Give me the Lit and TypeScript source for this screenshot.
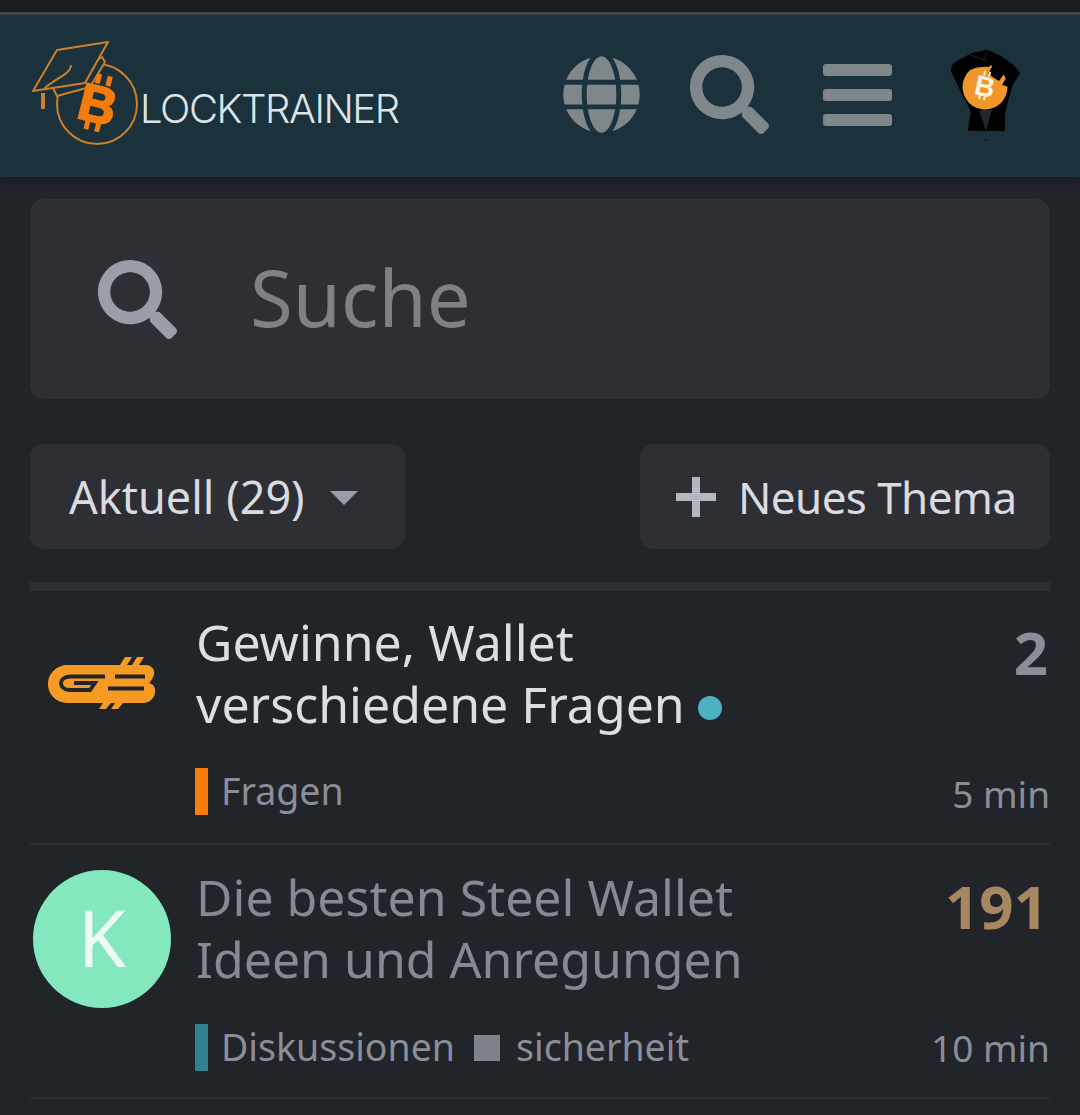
import { LitElement, html, css, svg } from 'lit';
import { customElement } from 'lit/decorators.js';

const searchPath = 'M505 442.7L405.3 343c-4.5-4.5-10.6-7-17-7H372c27.6-35.3 44-79.7 44-128C416 93.1 322.9 0 208 0S0 93.1 0 208s93.1 208 208 208c48.3 0 92.7-16.4 128-44v16.3c0 6.4 2.5 12.5 7 17l99.7 99.7c9.4 9.4 24.6 9.4 33.9 0l28.3-28.3c9.4-9.4 9.4-24.6.1-34zM208 336c-70.7 0-128-57.2-128-128 0-70.7 57.2-128 128-128 70.7 0 128 57.2 128 128 0 70.7-57.2 128-128 128z';
const globePath = 'M336.5 160C322 70.7 287.8 8 248 8s-74 62.7-88.5 152h177zM152 256c0 22.2 1.2 43.5 3.3 64h185.3c2.1-20.5 3.3-41.8 3.3-64s-1.2-43.5-3.3-64H155.3c-2.1 20.5-3.3 41.8-3.3 64zm324.7-96c-28.6-67.9-86.5-120.4-158-141.6 24.4 33.8 41.2 84.7 50 141.6h108zM177.2 18.4C105.8 39.6 47.8 92.1 19.3 160h108c8.7-56.9 25.5-107.8 49.9-141.6zM487.4 192H372.7c2.1 21 3.3 42.5 3.3 64s-1.2 43-3.3 64h114.6c5.5-20.5 8.6-41.8 8.6-64s-3.1-43.5-8.5-64zM120 256c0-21.5 1.2-43 3.3-64H8.6C3.2 212.5 0 233.8 0 256s3.2 43.5 8.6 64h114.6c-2-21-3.2-42.5-3.2-64zm39.5 96c14.5 89.3 48.7 152 88.5 152s74-62.7 88.5-152h-177zm159.3 141.6c71.4-21.2 129.4-73.7 158-141.6h-108c-8.8 56.9-25.6 107.8-50 141.6zM19.3 352c28.6 67.9 86.5 120.4 158 141.6-24.4-33.8-41.2-84.7-50-141.6h-108z';

const searchIcon = (cls: string) => html`<svg class=${cls} viewBox="0 0 512 512"><path fill="currentColor" d=${searchPath}></path></svg>`;

const logoMark = svg`
  <circle cx="97" cy="104" r="40" fill="none" stroke="#c9812d" stroke-width="2"></circle>
  <path d="M102 57 L105 62 L90 87 L57 96 L53 88 Z" fill="#1b313c" stroke="#c9812d" stroke-width="2" stroke-linejoin="round"></path>
  <path d="M57 50 L108 42 L85 83 L33 91 Z" fill="#1b313c" stroke="#c9812d" stroke-width="2" stroke-linejoin="round"></path>
  <path d="M71 66 C70 74 56 78 45 88" fill="none" stroke="#c9812d" stroke-width="2" stroke-linecap="round"></path>
  <rect x="41" y="93" width="4" height="16" fill="#c9812d"></rect>
  <g fill="#f57c0a" transform="rotate(14 97 103)">
    <text x="98" y="122" font-family="Liberation Sans" font-weight="700" font-size="52" stroke="#f57c0a" stroke-width="2" text-anchor="middle">B</text>
    <rect x="90" y="74" width="5" height="10"></rect><rect x="101" y="74" width="5" height="10"></rect>
    <rect x="90" y="121" width="5" height="10"></rect><rect x="101" y="121" width="5" height="10"></rect>
  </g>
`;

const fist = html`<svg class="fist" viewBox="0 0 74 94">
  <path d="M20 81 L23 62 L14 45 L3 22 C3 16 6 14 10 12 L24 5 L38 2 L52 8 L63 16 L70 24 L63 35 L58 52 L55 65 L55 81 Z" fill="#000" stroke="#000" stroke-width="2" stroke-linejoin="round"></path>
  <circle cx="36" cy="38" r="22.5" fill="#f0962a"></circle>
  <path d="M2 22 L13 26 C20 20 30 17 40 18 L48 8 L38 1 L23 4 L5 14 Z" fill="#000"></path>
  <path d="M39 25 L48 8 L62 15 L50 32 Z M53 36 L63 19 L71 24 L60 38 Z" fill="#000"></path>
  <path d="M22 6 L38 12 M38 3 L34 12" stroke="#1b313c" stroke-width="0.8" fill="none"></path>
  <path d="M30 61 L43 61 L37 82 Z" fill="#20282c"></path>
  <circle cx="37" cy="91" r="0.8" fill="#000"></circle>
  <g fill="#fff3dd" transform="rotate(12 36 37)">
    <text x="36" y="47" font-family="Liberation Sans" font-weight="700" font-size="28" text-anchor="middle">B</text>
    <rect x="32" y="22" width="2" height="5"></rect><rect x="37" y="22" width="2" height="5"></rect>
    <rect x="32" y="46" width="2" height="5"></rect><rect x="37" y="46" width="2" height="5"></rect>
  </g>
</svg>`;

const gbLogo = html`<svg class="gb" viewBox="0 0 110 52">
  <path fill="#f59a23" d="M20 8 H72 L77 0 H84 L79 8 H84 L89 0 H96 L91 8 H97 C106 8 108 16 105 20 C104 23 102 25 101 26 C105 27 108 30 107 36 C106 42 101 46 95 46 H75 L70 52 H63 L67 46 H63 L58 52 H51 L55 46 H20 C8 46 0 37 0 27 C0 16 9 8 20 8 Z"></path>
  <path fill="none" stroke="#212429" stroke-width="3.8" d="M57 19.5 H22 C10 19.5 10 33 22 33 H42 L47 26 H26"></path>
  <path fill="none" stroke="#212429" stroke-width="3.8" d="M67 19.5 H97 M60 31.5 H96"></path>
</svg>`;

@customElement('app-root')
export class AppRoot extends LitElement {
  static styles = css`
    :host {
      display: block;
      height: 1115px;
      overflow: hidden;
      background: #212429;
      font-family: 'Noto Sans', sans-serif;
    }
    .status {
      height: 12px;
      background: #1d1e20;
    }
    header {
      height: 162px;
      border-top: 3px solid #40484b;
      background: #1b313c;
      display: flex;
      align-items: center;
      box-shadow: 0 3px 10px rgba(0, 0, 0, 0.35);
      position: relative;
    }
    .logo {
      display: flex;
      align-items: center;
      width: 563px;
      flex: none;
    }
    .logo svg {
      width: 140px;
      height: 162px;
      flex: none;
    }
    .logo span {
      font-family: 'Inter', sans-serif;
      font-weight: 300;
      font-size: 40px;
      letter-spacing: -1.45px;
      color: #dde4e8;
      margin-top: 24px;
    }
    nav {
      display: flex;
      align-items: center;
      color: #7f878b;
    }
    nav svg {
      display: block;
      flex: none;
    }
    .globe { width: 77px; height: 79px; margin-top: -3px; }
    .nav-search { width: 79px; height: 79px; margin: -3px 0 0 50px; }
    .bars {
      width: 69px;
      margin: -3px 0 0 54px;
      display: grid;
      gap: 13px;
    }
    .bars i {
      display: block;
      height: 12px;
      border-radius: 3px;
      background: #7f878b;
    }
    .fist { width: 74px; height: 94px; margin-left: 57px; }
    main {
      padding: 22px 30px 0;
    }
    .search {
      height: 200px;
      border-radius: 14px;
      background: #2e2f35;
      display: flex;
      align-items: center;
      padding-left: 68px;
      color: #9b9ea9;
    }
    .search svg {
      width: 79px;
      height: 79px;
      flex: none;
    }
    .search span {
      margin: 0 0 4px 73px;
      font-size: 78px;
      color: #7e8084;
    }
    .controls {
      display: flex;
      justify-content: space-between;
      margin-top: 45px;
      padding-bottom: 33px;
      border-bottom: 9px solid #2e2f35;
    }
    .btn {
      height: 105px;
      border-radius: 14px;
      background: #2e2f35;
      display: flex;
      align-items: center;
      color: #d9dbe0;
      font-size: 45px;
      box-sizing: border-box;
    }
    .filter { width: 375px; padding-left: 39px; }
    .caret {
      margin-left: 25px;
      width: 0;
      height: 0;
      border-left: 14px solid transparent;
      border-right: 14px solid transparent;
      border-top: 14px solid #9b9ea9;
      margin-top: 2px;
    }
    .new {
      width: 410px;
      padding-left: 36px;
      font-size: 44px;
      letter-spacing: -0.6px;
    }
    .plus { width: 40px; height: 40px; margin-right: 22px; flex: none; color: #b5b7be; }
    .topic {
      display: grid;
      grid-template-columns: 165px 1fr auto;
      height: 252px;
      border-bottom: 2px solid #2e2f35;
    }
    .avatar-cell {
      padding-top: 25px;
      display: flex;
      justify-content: flex-start;
    }
    .gb {
      width: 110px;
      height: 52px;
      margin: 41px 0 0 18px;
    }
    .avatar {
      width: 138px;
      height: 138px;
      margin-left: 3px;
      padding-bottom: 4px;
      box-sizing: border-box;
      border-radius: 50%;
      background: #83e8bd;
      color: #eefaf5;
      display: flex;
      align-items: center;
      justify-content: center;
      font-size: 78px;
    }
    .body {
      display: flex;
      flex-direction: column;
      padding-top: 20px;
    }
    .title {
      font-size: 50px;
      line-height: 62px;
      padding-left: 1px;
      color: #dcdee3;
    }
    .title.read {
      color: #858993;
      padding-top: 1px;
      padding-bottom: 1px;
    }
    .dot {
      display: inline-block;
      width: 24px;
      height: 24px;
      border-radius: 50%;
      background: #4cb1c0;
      margin-left: 0;
      vertical-align: 3px;
    }
    .tags {
      display: flex;
      align-items: center;
      margin-top: 30px;
      font-size: 37.5px;
      color: #8b8e99;
    }
    .bar {
      width: 13px;
      height: 47px;
      margin: 2px 13px 0 0;
    }
    .square {
      width: 26px;
      height: 26px;
      background: #7f818b;
      margin: 3px 16px 0 19px;
    }
    .meta {
      display: flex;
      flex-direction: column;
      align-items: flex-end;
      justify-content: space-between;
      padding: 26px 0 24px;
    }
    .count {
      font-size: 60px;
      font-weight: 700;
      line-height: 70px;
      margin-right: 2px;
      color: #8b8e99;
    }
    .count.hot { color: #a88760; }
    .time {
      font-size: 37px;
      line-height: 50px;
      color: #8b8e99;
    }
  `;

  render() {
    return html`
      <div class="status"></div>
      <header>
        <div class="logo">
          <svg viewBox="0 15 140 162">${logoMark}</svg>
          <span>LOCKTRAINER</span>
        </div>
        <nav>
          <svg class="globe" viewBox="0 0 496 512"><path fill="currentColor" d=${globePath}></path></svg>
          ${searchIcon('nav-search')}
          <div class="bars"><i></i><i></i><i></i></div>
          ${fist}
        </nav>
      </header>
      <main>
        <div class="search">
          ${searchIcon('')}
          <span>Suche</span>
        </div>
        <div class="controls">
          <div class="btn filter">Aktuell (29)<span class="caret"></span></div>
          <div class="btn new">
            <svg class="plus" viewBox="0 0 40 40"><path fill="currentColor" d="M16 0h8v16h16v8H24v16h-8V24H0v-8h16z"></path></svg>
            Neues Thema
          </div>
        </div>
        <div class="topic">
          <div class="avatar-cell">${gbLogo}</div>
          <div class="body">
            <div class="title">Gewinne, Wallet<br />verschiedene Fragen <span class="dot"></span></div>
            <div class="tags"><span class="bar" style="background:#fb7c06"></span>Fragen</div>
          </div>
          <div class="meta"><div class="count">2</div><div class="time">5 min</div></div>
        </div>
        <div class="topic">
          <div class="avatar-cell"><div class="avatar">K</div></div>
          <div class="body">
            <div class="title read">Die besten Steel Wallet<br />Ideen und Anregungen</div>
            <div class="tags"><span class="bar" style="background:#35808f"></span>Diskussionen<span class="square"></span>sicherheit</div>
          </div>
          <div class="meta"><div class="count hot">191</div><div class="time">10 min</div></div>
        </div>
      </main>
    `;
  }
}
